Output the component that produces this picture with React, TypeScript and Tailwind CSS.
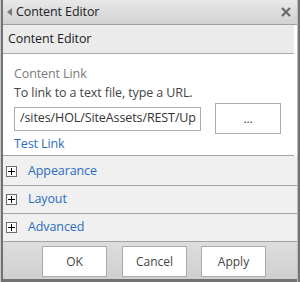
import React from "react";

const font = { fontFamily: '"Open Sans", "Noto Sans", sans-serif' };

function PlusBox() {
  return (
    <div className="w-[11px] h-[11px] border border-[#6b6b6b] bg-white flex items-center justify-center">
      <svg width="7" height="7" viewBox="0 0 7 7">
        <rect x="0" y="3" width="7" height="1" fill="#000" />
        <rect x="3" y="0" width="1" height="7" fill="#000" />
      </svg>
    </div>
  );
}

function Row({ label, first }: { label: string; first?: boolean }) {
  return (
    <div
      className={`flex items-center bg-[#f0f0f0] border-b border-[#a3a3a3] ${first ? "h-[30px] pt-[2px]" : "h-[28px]"}`}
    >
      <div className="ml-[3px]">
        <PlusBox />
      </div>
      <span className="ml-[11px] text-[12.5px] tracking-[-0.1px] text-[#2a6cc4]">{label}</span>
    </div>
  );
}

function Btn({ label }: { label: string }) {
  return (
    <div className="w-[65px] h-[31px] bg-white border border-[#ababab] flex items-center justify-center text-[12px] text-[#444]">
      {label}
    </div>
  );
}

export default function App() {
  return (
    <div className="w-[300px] h-[282px] flex bg-[#d6d6d6]" style={font}>
      <div className="w-[1px] bg-[#c9c9c9]" />
      <div className="w-[2px] bg-[#727272]" />
      <div className="flex-1 flex flex-col">
        <div className="h-[25px] border-b border-[#a0a0a0] bg-gradient-to-b from-[#e8e8e8] to-[#d2d2d2] flex items-center">
          <svg width="6" height="8" viewBox="0 0 6 8" className="ml-[4px]">
            <polygon points="5,0 5,8 0,4" fill="#7a7a7a" />
          </svg>
          <span className="ml-[3px] text-[12.5px] tracking-[-0.1px] text-[#222]">Content Editor</span>
          <div className="flex-1" />
          <svg width="10" height="10" viewBox="0 0 10 10" className="mr-[6px]">
            <path d="M1 1 L9 9 M9 1 L1 9" stroke="#6a6a6a" strokeWidth="2.2" />
          </svg>
        </div>
        <div className="flex bg-white">
          <div className="flex-1 flex flex-col">
            <div className="h-[29px] bg-[#ebebeb] border-b border-[#a9a9a9] flex items-center pl-[5px] text-[12.5px] tracking-[-0.1px] text-[#222]">
              Content Editor
            </div>
            <div className="h-[102px] border-b border-[#a3a3a3] pl-[11px] pt-[11px] flex flex-col text-[12.5px] tracking-[-0.1px]">
              <div className="leading-[18px] text-[#7a7a7a]">Content Link</div>
              <div className="leading-[18px] text-[#444] mt-[1px]">To link to a text file, type a URL.</div>
              <div className="flex items-center mt-[1px] h-[31px]">
                <div className="w-[187px] h-[24px] border border-[#ababab] flex items-center pl-[5px] overflow-hidden whitespace-nowrap text-[#333]">
                  /sites/HOL/SiteAssets/REST/Up
                </div>
                <div className="ml-[14px] w-[66px] h-[31px] border border-[#ababab] flex items-center justify-center text-[12px] text-[#444]">
                  ...
                </div>
              </div>
              <div className="leading-[18px] text-[#2a6cc4] mt-[1px]">Test Link</div>
            </div>
          </div>
          <div className="w-[3px] bg-white" />
        </div>
        <Row label="Appearance" first />
        <Row label="Layout" />
        <Row label="Advanced" />
        <div className="flex-1 bg-gradient-to-b from-[#dedede] to-[#cfcfcf] flex items-start pt-[4px] pl-[39px] gap-[15px]">
          <Btn label="OK" />
          <Btn label="Cancel" />
          <div className="-ml-[1px]">
            <Btn label="Apply" />
          </div>
        </div>
        <div className="h-[3px] bg-[#727272]" />
      </div>
      <div className="w-[3px] flex">
        <div className="w-[1px] bg-[#bdbdbd]" />
        <div className="w-[2px] bg-[#737373]" />
      </div>
    </div>
  );
}
